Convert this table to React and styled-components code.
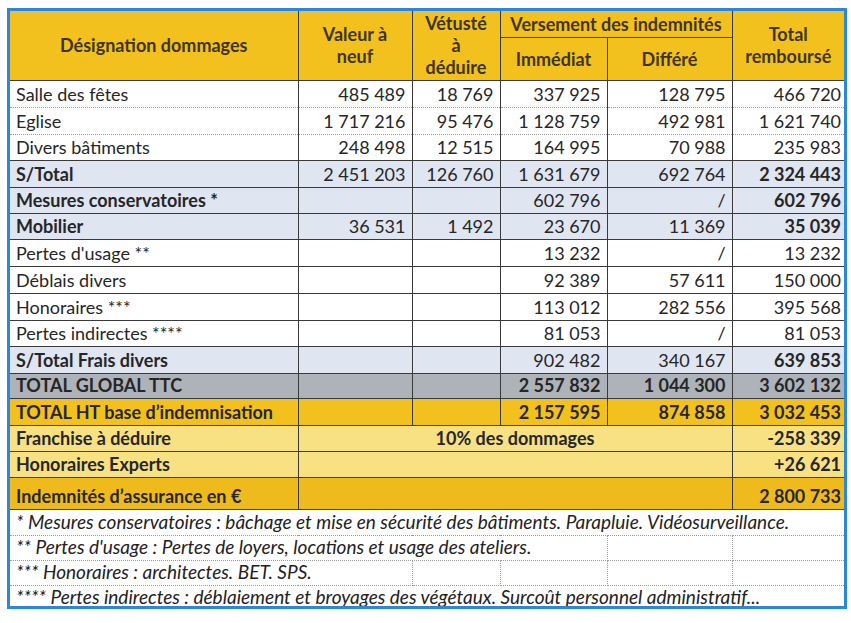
import React from "react";
import styled, { createGlobalStyle } from "styled-components";

const GlobalStyle = createGlobalStyle`
  html, body {
    margin: 0;
    padding: 0;
    background: #fff;
  }
  body {
    font-family: Lato, "Open Sans", sans-serif;
  }
`;

const TONES = {
  white: "#ffffff",
  blue: "#dfe5f1",
  gray: "#aeb3ba",
  gold: "#f3c11e",
  pale: "#f8e183",
  deep: "#efbb1c",
};

const DARK = "#3a3a3a";
const DOT = "1px dotted #9a9a9a";

const Page = styled.div`
  padding: 8px 0 0 7px;
`;

const Frame = styled.div`
  width: 834px;
  height: 595px;
  border: 3px solid #2b87d9;
  overflow: hidden;
`;

const Table = styled.table`
  width: 834px;
  border-collapse: collapse;
  table-layout: fixed;
  font-size: 18px;
  color: #262626;
`;

const HeadRow = styled.tr`
  height: ${(p) => p.$h}px;
  background: ${TONES.gold};
`;

const HeadCell = styled.th`
  padding: 0 4px;
  font-weight: 700;
  line-height: 22px;
  color: #3e3414;
  text-align: center;
  vertical-align: middle;
  border-bottom: 1px solid ${DARK};
  border-right: ${(p) => (p.$last ? "none" : `1px solid ${DARK}`)};
`;

const Row = styled.tr`
  height: ${(p) => p.$h || 26}px;
  background: ${(p) => TONES[p.$tone || "white"]};
`;

const Cell = styled.td`
  padding: 0 ${(p) => (p.$last ? 3 : 6)}px 2px 6px;
  line-height: 22px;
  white-space: nowrap;
  vertical-align: bottom;
  text-align: ${(p) => p.$align || "right"};
  font-weight: ${(p) => (p.$bold ? 700 : 400)};
  border-bottom: ${(p) => (p.$dotted ? DOT : `1px solid ${DARK}`)};
  border-right: ${(p) => (p.$last ? "none" : `1px solid ${DARK}`)};
`;

const Note = styled.td`
  padding: 0 6px 2px 6px;
  font-size: 19px;
  line-height: 22px;
  white-space: nowrap;
  vertical-align: bottom;
  font-style: italic;
  color: #222;
  border-bottom: ${DOT};
  border-right: ${(p) => (p.$edge ? DOT : "none")};
`;

const LastNote = styled(Note)`
  vertical-align: top;
  padding: 0 6px;
  border-bottom: none;
`;

const rows = [
  { label: "Salle des fêtes", cells: ["485 489", "18 769", "337 925", "128 795", "466 720"], dotted: true, h: 27 },
  { label: "Eglise", cells: ["1 717 216", "95 476", "1 128 759", "492 981", "1 621 740"], dotted: true, h: 27 },
  { label: "Divers bâtiments", cells: ["248 498", "12 515", "164 995", "70 988", "235 983"] },
  { label: "S/Total", cells: ["2 451 203", "126 760", "1 631 679", "692 764", "2 324 443"], tone: "blue", strong: "label total", h: 27 },
  { label: "Mesures conservatoires *", cells: ["", "", "602 796", "/", "602 796"], tone: "blue", strong: "label total" },
  { label: "Mobilier", cells: ["36 531", "1 492", "23 670", "11 369", "35 039"], tone: "blue", strong: "label total" },
  { label: "Pertes d'usage **", cells: ["", "", "13 232", "/", "13 232"], h: 27 },
  { label: "Déblais divers", cells: ["", "", "92 389", "57 611", "150 000"], h: 27 },
  { label: "Honoraires ***", cells: ["", "", "113 012", "282 556", "395 568"], h: 27 },
  { label: "Pertes indirectes ****", cells: ["", "", "81 053", "/", "81 053"] },
  { label: "S/Total Frais divers", cells: ["", "", "902 482", "340 167", "639 853"], tone: "blue", strong: "label total", h: 27 },
  { label: "TOTAL GLOBAL TTC", cells: ["", "", "2 557 832", "1 044 300", "3 602 132"], tone: "gray", strong: "all", h: 24 },
  { label: "TOTAL HT base d’indemnisation", cells: ["", "", "2 157 595", "874 858", "3 032 453"], tone: "gold", strong: "all", h: 27 },
];

const summary = [
  { label: "Franchise à déduire", middle: "10% des dommages", total: "-258 339", tone: "pale", h: 26 },
  { label: "Honoraires Experts", middle: "", total: "+26 621", tone: "pale", h: 26 },
  { label: "Indemnités d’assurance en €", middle: "", total: "2 800 733", tone: "deep", h: 32 },
];

const DataRow = ({ row }) => {
  const all = row.strong === "all";
  const boldLabel = all || (row.strong || "").includes("label");
  const boldTotal = all || (row.strong || "").includes("total");
  return (
    <Row $tone={row.tone} $h={row.h}>
      <Cell $align="left" $bold={boldLabel} $dotted={row.dotted}>{row.label}</Cell>
      {row.cells.map((v, i) => (
        <Cell
          key={i}
          $dotted={row.dotted}
          $last={i === row.cells.length - 1}
          $bold={i === row.cells.length - 1 ? boldTotal : all}
        >
          {v}
        </Cell>
      ))}
    </Row>
  );
};

export default function App() {
  return (
    <>
      <GlobalStyle />
      <Page>
        <Frame>
          <Table>
            <colgroup>
              <col style={{ width: 288 }} />
              <col style={{ width: 114 }} />
              <col style={{ width: 88 }} />
              <col style={{ width: 107 }} />
              <col style={{ width: 125 }} />
              <col style={{ width: 112 }} />
            </colgroup>
            <thead>
              <HeadRow $h={26}>
                <HeadCell rowSpan={2}>Désignation dommages</HeadCell>
                <HeadCell rowSpan={2}>Valeur à<br />neuf</HeadCell>
                <HeadCell rowSpan={2}>Vétusté<br />à<br />déduire</HeadCell>
                <HeadCell colSpan={2}>Versement des indemnités</HeadCell>
                <HeadCell rowSpan={2} $last>Total<br />remboursé</HeadCell>
              </HeadRow>
              <HeadRow $h={43}>
                <HeadCell>Immédiat</HeadCell>
                <HeadCell>Différé</HeadCell>
              </HeadRow>
            </thead>
            <tbody>
              {rows.map((row) => (
                <DataRow key={row.label} row={row} />
              ))}
              {summary.map((s) => (
                <Row key={s.label} $tone={s.tone} $h={s.h}>
                  <Cell $align="left" $bold>{s.label}</Cell>
                  <Cell colSpan={4} $align="center" $bold>{s.middle}</Cell>
                  <Cell $bold $last>{s.total}</Cell>
                </Row>
              ))}
              <Row $h={26}>
                <Note colSpan={6}>
                  * Mesures conservatoires : bâchage et mise en sécurité des bâtiments. Parapluie. Vidéosurveillance.
                </Note>
              </Row>
              <Row $h={25}>
                <Note colSpan={4} $edge>
                  ** Pertes d'usage : Pertes de loyers, locations et usage des ateliers.
                </Note>
                <Note $edge />
                <Note />
              </Row>
              <Row $h={25}>
                <Note colSpan={2} $edge>*** Honoraires : architectes. BET. SPS.</Note>
                <Note $edge />
                <Note $edge />
                <Note $edge />
                <Note />
              </Row>
              <Row $h={22}>
                <LastNote colSpan={6}>
                  **** Pertes indirectes : déblaiement et broyages des végétaux. Surcoût personnel administratif...
                </LastNote>
              </Row>
            </tbody>
          </Table>
        </Frame>
      </Page>
    </>
  );
}
